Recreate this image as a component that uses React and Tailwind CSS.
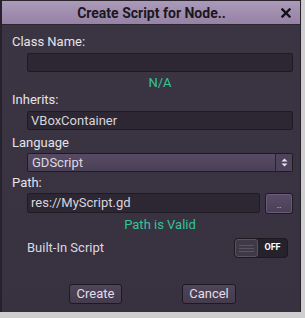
import React from 'react';

const Label = ({ children, className = '' }) => (
  <div className={`h-[16px] leading-[16px] text-[13px] text-[#e6e2ea] ${className}`}>{children}</div>
);

const Field = ({ value, className = '' }) => (
  <div
    className={`h-[19px] ml-[15px] rounded-[2px] border border-[#1f1b24] bg-[#2c2732] px-[3px] leading-[17px] text-[13px] text-[#d9d4de] ${className}`}
  >
    {value}
  </div>
);

const Status = ({ children, className = '' }) => (
  <div className={`h-[16px] leading-[16px] text-center text-[13px] text-[#33c49a] pl-[15px] ${className}`}>{children}</div>
);

export default function App() {
  return (
    <div className="w-[305px] h-[318px] bg-[#cfcfcf] overflow-hidden" style={{ fontFamily: 'Roboto, "Noto Sans", sans-serif' }}>
      <div className="w-[301px] h-[312px] flex flex-col bg-[#3a3441] border-l-2 border-r border-[#26212b]">
        {/* title bar */}
        <div className="h-[25px] pt-[1px] flex items-center bg-gradient-to-b from-[#ac9aba] to-[#9582a4] border-b border-t border-[#2b2530]">
          <div className="flex-1 text-center pl-[22px] text-[14px] font-bold text-[#1b1720]">Create Script for Node..</div>
          <div className="w-[14px] mr-[7px] flex justify-center">
            <svg width="10" height="10" viewBox="0 0 10 10">
              <path d="M1.5 1.5 L8.5 8.5 M8.5 1.5 L1.5 8.5" stroke="#141116" strokeWidth="2.4" strokeLinecap="square" />
            </svg>
          </div>
        </div>

        <div className="flex flex-col pl-[10px] pr-[7px] bg-gradient-to-b from-[#3b3543] to-[#373140]">
          <Label className="mt-[9px]">Class Name:</Label>
          <Field value="" className="mt-[3px]" />
          <Status className="mt-[3px]">N/A</Status>
          <Label className="mt-[1px]">Inherits:</Label>
          <Field value="VBoxContainer" className="mt-[3px]" />
          <Label className="mt-[5px]">Language</Label>

          <div className="h-[19px] ml-[15px] mt-[2px] flex rounded-[2px] border border-[#1f1b24] bg-gradient-to-b from-[#574b63] to-[#4a4055]">
            <div className="flex-1 px-[4px] leading-[17px] text-[13px] text-[#ddd8e2]">GDScript</div>
            <div className="w-[17px] flex flex-col items-center justify-center border-l border-[#2a2430] bg-[#4d435a]">
              <svg width="7" height="9" viewBox="0 0 7 9">
                <path d="M3.5 0.5 L6.5 3.5 H0.5 Z" fill="#e8e4ec" />
                <path d="M3.5 8.5 L6.5 5.5 H0.5 Z" fill="#e8e4ec" />
              </svg>
            </div>
          </div>

          <Label className="mt-[3px]">Path:</Label>
          <div className="flex mt-[2px] ml-[15px] gap-[5px]">
            <div className="flex-1 h-[20px] rounded-[2px] border border-[#1f1b24] bg-[#2c2732] px-[3px] leading-[18px] text-[13px] text-[#d9d4de]">
              res://MyScript.gd
            </div>
            <div className="w-[28px] h-[21px] rounded-[3px] border border-[#1e1a22] bg-gradient-to-b from-[#5a4c69] to-[#4a3f56] shadow-[inset_0_0_0_1px_#6a5a7a] flex items-end justify-center pb-[3px]">
              <span className="text-[9px] leading-[9px] text-[#e6e1ea]">..</span>
            </div>
          </div>
          <Status className="mt-[3px]">Path is Valid</Status>

          <div className="flex items-center justify-between mt-[5px] ml-[15px] pr-[5px] h-[20px]">
            <span className="text-[13px] text-[#dcd7e1]">Built-In Script</span>
            <div className="w-[54px] h-[20px] flex rounded-[4px] bg-[#26222b] border border-[#1b181f]">
              <div className="w-[23px] h-[18px] rounded-[3px] border border-[#5a5262] bg-[#3f3846] flex flex-col justify-center gap-[2px] px-[3px]">
                <div className="h-px bg-[#5b5364]" />
                <div className="h-px bg-[#5b5364]" />
                <div className="h-px bg-[#5b5364]" />
              </div>
              <div className="flex-1 flex items-center justify-center text-[9px] font-bold text-white">OFF</div>
            </div>
          </div>

          <div className="flex mt-[26px] h-[20px]">
            <div className="ml-[57px] w-[53px] h-[20px] rounded-[3px] border border-[#1e1a22] bg-gradient-to-b from-[#4f4459] to-[#443b4d] text-center leading-[18px] text-[13px] text-[#e2dde6]">
              Create
            </div>
            <div className="ml-[60px] w-[54px] h-[20px] rounded-[3px] border border-[#1e1a22] bg-gradient-to-b from-[#4f4459] to-[#443b4d] text-center leading-[18px] text-[13px] text-[#e2dde6]">
              Cancel
            </div>
          </div>
        </div>
        <div className="flex-1 bg-[#373140]" />
      </div>
    </div>
  );
}
